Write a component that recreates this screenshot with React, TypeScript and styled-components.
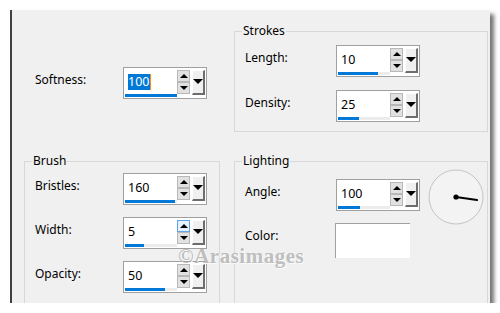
import React from 'react';
import styled, { createGlobalStyle, css } from 'styled-components';

const GlobalStyle = createGlobalStyle`
    html, body {
        margin: 0;
        padding: 0;
        background: #ffffff;
        font-family: "Noto Sans", "Open Sans", Arial, sans-serif;
        font-size: 12px;
        color: #000;
    }
`;

const Panel = styled.div`
    position: relative;
    box-sizing: border-box;
    width: 480px;
    height: 293px;
    margin: 10px 0 0 10px;
    padding: 13px 0 0 12px;
    background: #f0f0f0;
    border-left: 2px solid #404040;
    box-shadow: 4px 4px 4px rgba(0, 0, 0, 0.55);
    overflow: hidden;

    display: grid;
    grid-template-columns: 196px 254px;
    grid-template-rows: 109px 1fr;
    column-gap: 14px;
    row-gap: 21px;
`;

const Group = styled.fieldset<{ $height: number }>`
    box-sizing: border-box;
    margin: 0;
    padding: 0;
    min-width: 0;
    height: ${p => p.$height}px;
    border: 1px solid #d8d8d8;
`;

const Legend = styled.legend`
    margin-left: 7px;
    padding: 0 1px;
    font-size: 12px;
    line-height: 16px;
`;

const Rows = styled.div<{ $top: number; $gap: number }>`
    display: flex;
    flex-direction: column;
    gap: ${p => p.$gap}px;
    padding: ${p => p.$top}px 0 0 10px;
`;

const Row = styled.div<{ $label: number }>`
    display: grid;
    grid-template-columns: ${p => p.$label}px auto;
    align-items: start;
`;

const SoftRow = styled(Row)`
    margin-top: 44px;
    padding-left: 11px;
    align-self: start;
`;

const Label = styled.span`
    margin-top: 5px;
    line-height: 16px;
`;

const Box = styled.div`
    box-sizing: border-box;
    width: 84px;
    height: 32px;
    display: flex;
    align-items: flex-start;
    padding: 1px;
    background: #ffffff;
    border: 1px solid #a0a0a0;
`;

const Field = styled.div`
    width: 52px;
    height: 28px;
    display: flex;
    flex-direction: column;
    padding-top: 5px;
    box-sizing: border-box;
`;

const Value = styled.span<{ $selected?: boolean }>`
    align-self: flex-start;
    margin-left: 3px;
    padding-right: 1px;
    line-height: 16px;
    font-size: 12.5px;
    ${p => p.$selected && css`
        background: #0078d7;
        color: #ffffff;
        border-right: 1px solid #ff8a1e;
    `}
`;

const Track = styled.div<{ $fill: number }>`
    margin-top: auto;
    height: 3px;
    background: linear-gradient(to right, #0078d7 ${p => p.$fill}px, #ececec ${p => p.$fill}px);
`;

const SpinStack = styled.div`
    display: flex;
    flex-direction: column;
    margin-top: 1px;
`;

const SpinButton = styled.div<{ $hover?: boolean }>`
    box-sizing: border-box;
    width: 13px;
    height: 12px;
    display: flex;
    align-items: center;
    justify-content: center;
    background: ${p => (p.$hover ? '#e5f1fb' : '#e1e1e1')};
    border: 1px solid ${p => (p.$hover ? '#5fa3e6' : '#b8b8b8')};
`;

const Arrow = styled.span<{ $up?: boolean; $size: number }>`
    width: 0;
    height: 0;
    border-left: ${p => p.$size}px solid transparent;
    border-right: ${p => p.$size}px solid transparent;
    ${p => (p.$up
        ? css`border-bottom: ${p.$size}px solid #000;`
        : css`border-top: ${p.$size}px solid #000;`)}
`;

const DropButton = styled.div`
    box-sizing: border-box;
    width: 13px;
    height: 25px;
    margin: 1px 0 0 2px;
    display: flex;
    justify-content: center;
    padding-top: 8px;
    background: #f0f0f0;
    border-top: 1px solid #ffffff;
    border-left: 1px solid #ffffff;
    border-right: 2px solid #6d6d6d;
    border-bottom: 2px solid #6d6d6d;
`;

const ColorBox = styled.div`
    width: 75px;
    height: 35px;
    margin-left: -1px;
    box-sizing: border-box;
    background: #ffffff;
    border-top: 1px solid #a0a0a0;
    border-left: 1px solid #a0a0a0;
`;

const LightGrid = styled.div`
    display: grid;
    grid-template-columns: 91px 94px auto;
    grid-template-rows: 32px 35px;
    row-gap: 12px;
    padding: 10px 0 0 10px;
`;

const Dial = styled.svg`
    grid-column: 3;
    grid-row: 1 / span 2;
    margin: -10px 0 0 -2px;
`;

const Watermark = styled.div`
    position: absolute;
    left: 166px;
    top: 234px;
    font-family: "Liberation Serif", "DejaVu Serif", serif;
    font-weight: bold;
    font-size: 21px;
    letter-spacing: 0.5px;
    color: rgba(165, 165, 165, 0.7);
    text-shadow: 1px 1px 0 rgba(255, 255, 255, 0.8);
    pointer-events: none;
`;

interface SpinProps {
    value: string
    fill: number
    selected?: boolean
    hoverUp?: boolean
}

const Spin: React.FC<SpinProps> = ({ value, fill, selected, hoverUp }) => (
    <Box>
        <Field>
            <Value $selected={selected}>{value}</Value>
            <Track $fill={fill} />
        </Field>
        <SpinStack>
            <SpinButton $hover={hoverUp}><Arrow $up $size={4} /></SpinButton>
            <SpinButton><Arrow $size={4} /></SpinButton>
        </SpinStack>
        <DropButton><Arrow $size={5} /></DropButton>
    </Box>
);

const App: React.FC = () => {
    return (
        <>
            <GlobalStyle />
            <Panel>
                <SoftRow $label={88}>
                    <Label>Softness:</Label>
                    <Spin value="100" fill={52} selected />
                </SoftRow>

                <Group $height={109}>
                    <Legend>Strokes</Legend>
                    <Rows $top={6} $gap={13}>
                        <Row $label={91}>
                            <Label>Length:</Label>
                            <Spin value="10" fill={40} />
                        </Row>
                        <Row $label={91}>
                            <Label>Density:</Label>
                            <Spin value="25" fill={21} />
                        </Row>
                    </Rows>
                </Group>

                <Group $height={170}>
                    <Legend>Brush</Legend>
                    <Rows $top={4} $gap={12}>
                        <Row $label={88}>
                            <Label>Bristles:</Label>
                            <Spin value="160" fill={50} />
                        </Row>
                        <Row $label={88}>
                            <Label>Width:</Label>
                            <Spin value="5" fill={19} hoverUp />
                        </Row>
                        <Row $label={88}>
                            <Label>Opacity:</Label>
                            <Spin value="50" fill={40} />
                        </Row>
                    </Rows>
                </Group>

                <Group $height={170}>
                    <Legend>Lighting</Legend>
                    <LightGrid>
                        <Label>Angle:</Label>
                        <Spin value="100" fill={22} />
                        <Dial width="56" height="56" viewBox="0 0 56 56">
                            <circle cx="28" cy="28" r="27" fill="#f3f3f3" stroke="#c4c4c4" strokeWidth="1" />
                            <line x1="28" y1="28" x2="49" y2="31" stroke="#000" strokeWidth="2" strokeLinecap="round" />
                            <circle cx="28" cy="28" r="2.6" fill="#000" />
                        </Dial>
                        <Label>Color:</Label>
                        <ColorBox />
                    </LightGrid>
                </Group>

                <Watermark>©Arasimages</Watermark>
            </Panel>
        </>
    );
};

export default App;
